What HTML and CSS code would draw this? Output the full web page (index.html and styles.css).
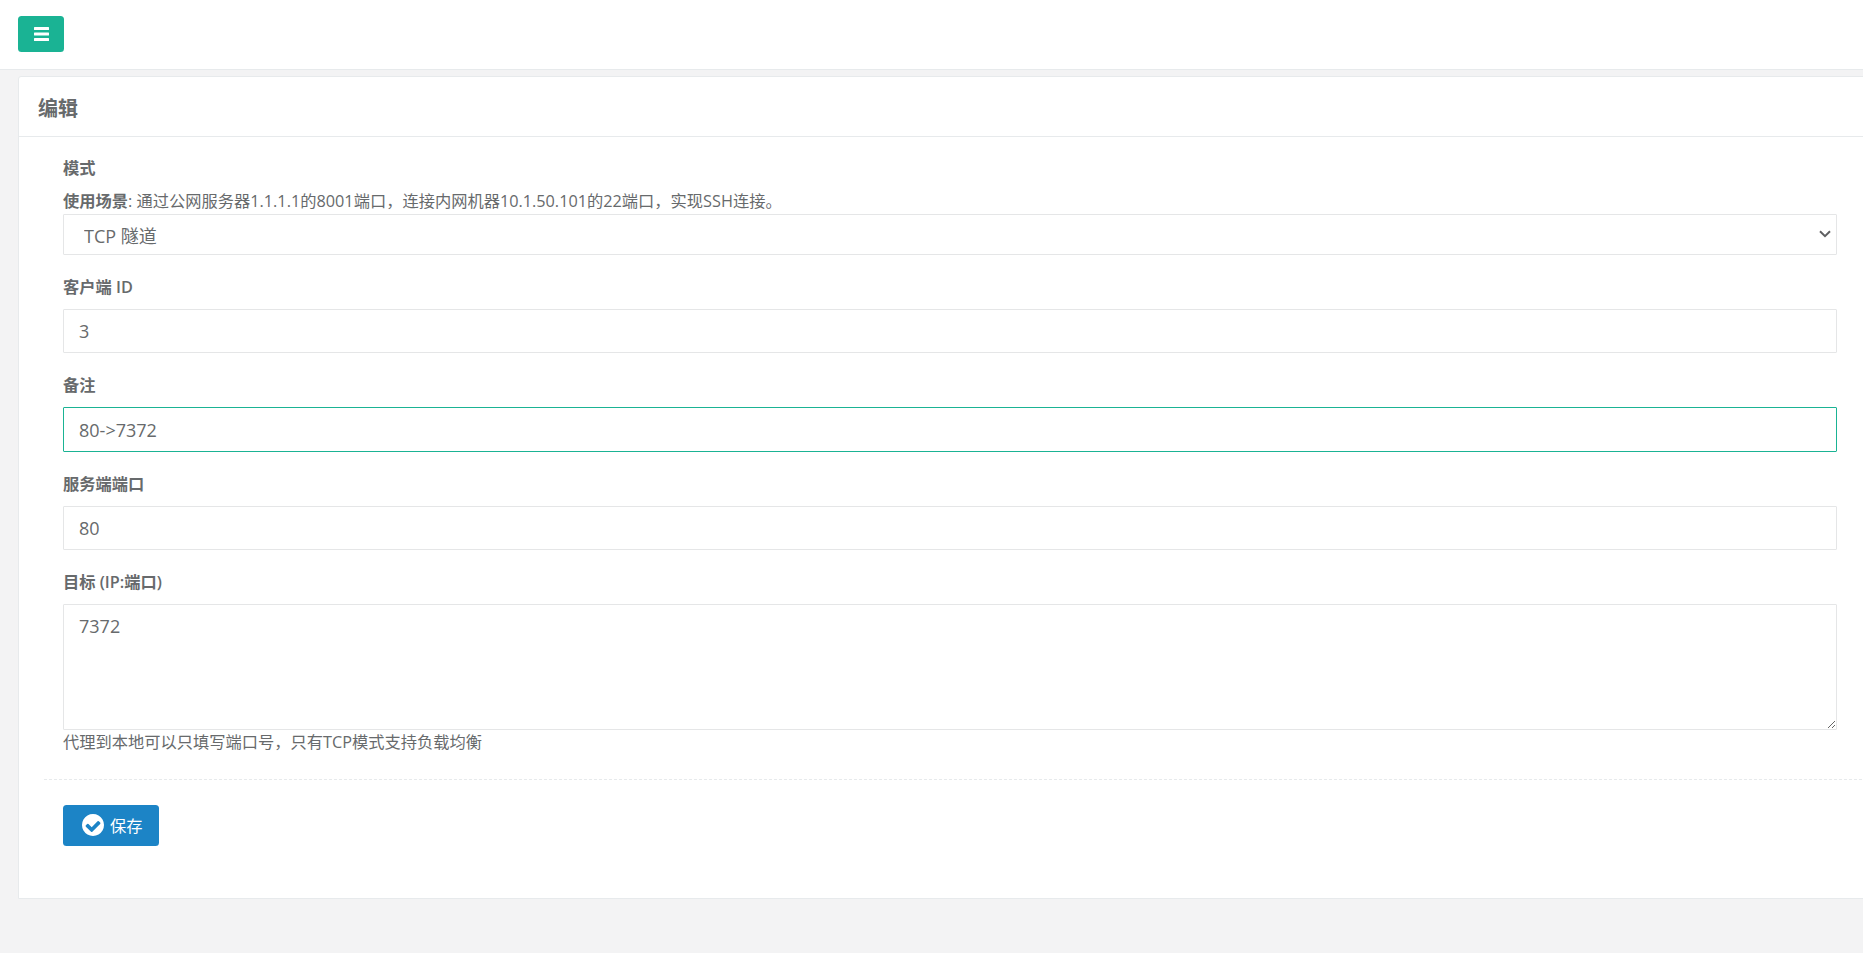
FILE: index.html
```html
<!DOCTYPE html>
<html lang="zh-CN">
<head>
<meta charset="utf-8">
<title>编辑</title>
<link rel="stylesheet" href="styles.css">
</head>
<body>
<nav class="topbar">
  <a class="menu-btn" href="#" aria-label="菜单">
    <svg class="menu-icon" viewBox="0 0 15 14"><rect y="0" width="15" height="3" rx=".5"/><rect y="5.500" width="15" height="3" rx=".5"/><rect y="11" width="15" height="3" rx=".5"/></svg>
  </a>
</nav>
<main class="content">
  <section class="card">
    <header class="card-title"><h5>编辑</h5></header>
    <form class="card-body">
      <div class="field field-mode">
        <label class="label">模式</label>
        <p class="hint-top"><b>使用场景</b>: 通过公网服务器1.1.1.1的8001端口，连接内网机器10.1.50.101的22端口，实现SSH连接。</p>
        <select class="control select"><option>TCP 隧道</option></select>
      </div>
      <div class="field">
        <label class="label">客户端 ID</label>
        <input class="control input" type="text" value="3">
      </div>
      <div class="field">
        <label class="label">备注</label>
        <input class="control input is-focus" type="text" value="80-&gt;7372">
      </div>
      <div class="field">
        <label class="label">服务端端口</label>
        <input class="control input" type="text" value="80">
      </div>
      <div class="field">
        <label class="label">目标 (IP:端口)</label>
        <textarea class="control textarea">7372</textarea>
        <span class="help">代理到本地可以只填写端口号，只有TCP模式支持负载均衡</span>
      </div>
      <div class="divider"></div>
      <div class="actions">
        <button class="save-btn" type="button">
          <svg class="save-icon" viewBox="0 0 1536 1536"><path fill-rule="evenodd" d="M1284 638q0-28-18-46l-91-90q-19-19-45-19t-45 19L677 929 451 703q-19-19-45-19t-45 19l-91 90q-18 18-18 46 0 27 18 45l362 362q19 19 45 19 27 0 46-19l543-543q18-18 18-45zM1536 768q0 209-103 385.500T1153.500 1433 768 1536t-385.500-103T103 1153.500 0 768t103-385.500T382.500 103 768 0t385.500 103T1433 382.500 1536 768z"/></svg>
          <span>保存</span>
        </button>
      </div>
    </form>
  </section>
</main>
</body>
</html>
```
FILE: styles.css
```css
* { box-sizing: border-box; }
html, body { margin: 0; height: 100%; }
body {
  background: #f3f3f4;
  color: #676a6c;
  font-family: "Open Sans", "Noto Sans CJK SC", sans-serif;
  font-size: 16.25px;
  overflow: hidden;
}
.topbar {
  height: 70px;
  background: #fff;
  border-bottom: 1px solid #e7eaec;
  padding: 16px 18px;
}
.menu-btn {
  display: flex;
  align-items: center;
  justify-content: center;
  width: 46px;
  height: 36px;
  background: #1ab394;
  border-radius: 3.500px;
}
.menu-icon { width: 15px; height: 14px; fill: #fff; }
.content { padding: 6px 0 0 18px; }
.card {
  width: 1865px;
  height: 823px;
  background: #fff;
  border: 1px solid #e7eaec;
  border-radius: 3px 0 0 0;
}
.card-title {
  height: 60px;
  border-bottom: 1px solid #e7eaec;
  padding: 2px 19px 0;
  display: flex;
  align-items: center;
}
.card-title h5 { margin: 0; font-size: 20px; font-weight: 600; }
.card-body { padding: 20px 0 0 25px; width: 1818px; }
.field { padding: 0 0 0 19px; margin-bottom: 21px; }
.field-mode { margin-bottom: 21.350px; }
.label { display: block; font-weight: 600; line-height: 22px; margin-bottom: 11.150px; }
.hint-top { margin: 0 0 2px; line-height: 22px; }
.hint-top b { font-weight: 600; }
.field-mode .label { margin-bottom: 11px; }
.control {
  display: block;
  width: 100%;
  background-color: #fff;
  border: 1px solid #e5e6e7;
  border-radius: 1px;
  color: #676a6c;
  font-family: inherit;
  font-size: 18px;
  outline: none;
}
.select {
  appearance: none;
  height: 40.500px;
  padding: 3px 40px 0 20px;
  background-image: url("data:image/svg+xml,%3Csvg xmlns='http://www.w3.org/2000/svg' width='12' height='8' viewBox='0 0 12 8'%3E%3Cpath d='M1 1.200l5 5 5-5' fill='none' stroke='%235f6062' stroke-width='2'/%3E%3C/svg%3E");
  background-repeat: no-repeat;
  background-position: right 5px center;
}
.input { height: 44.250px; padding: 0 15px; }
.is-focus { border-color: #1ab394; }
.textarea { height: 125.800px; padding: 9px 15px; resize: vertical; }
.help { display: block; line-height: 22px; margin-top: 1px; }
.divider { border-top: 1px dashed #e7eaec; margin: 26px -40px 25px 0; }
.actions { padding-left: 19px; }
.save-btn {
  display: flex;
  align-items: center;
  gap: 6px;
  width: 96px;
  height: 41px;
  padding: 0 0 0 19px;
  background: #1c84c6;
  border: 0;
  border-radius: 3.500px;
  color: #fff;
  font-family: inherit;
  font-size: 16.250px;
}
.save-icon { width: 22px; height: 22px; fill: #fff; flex: none; }
```
